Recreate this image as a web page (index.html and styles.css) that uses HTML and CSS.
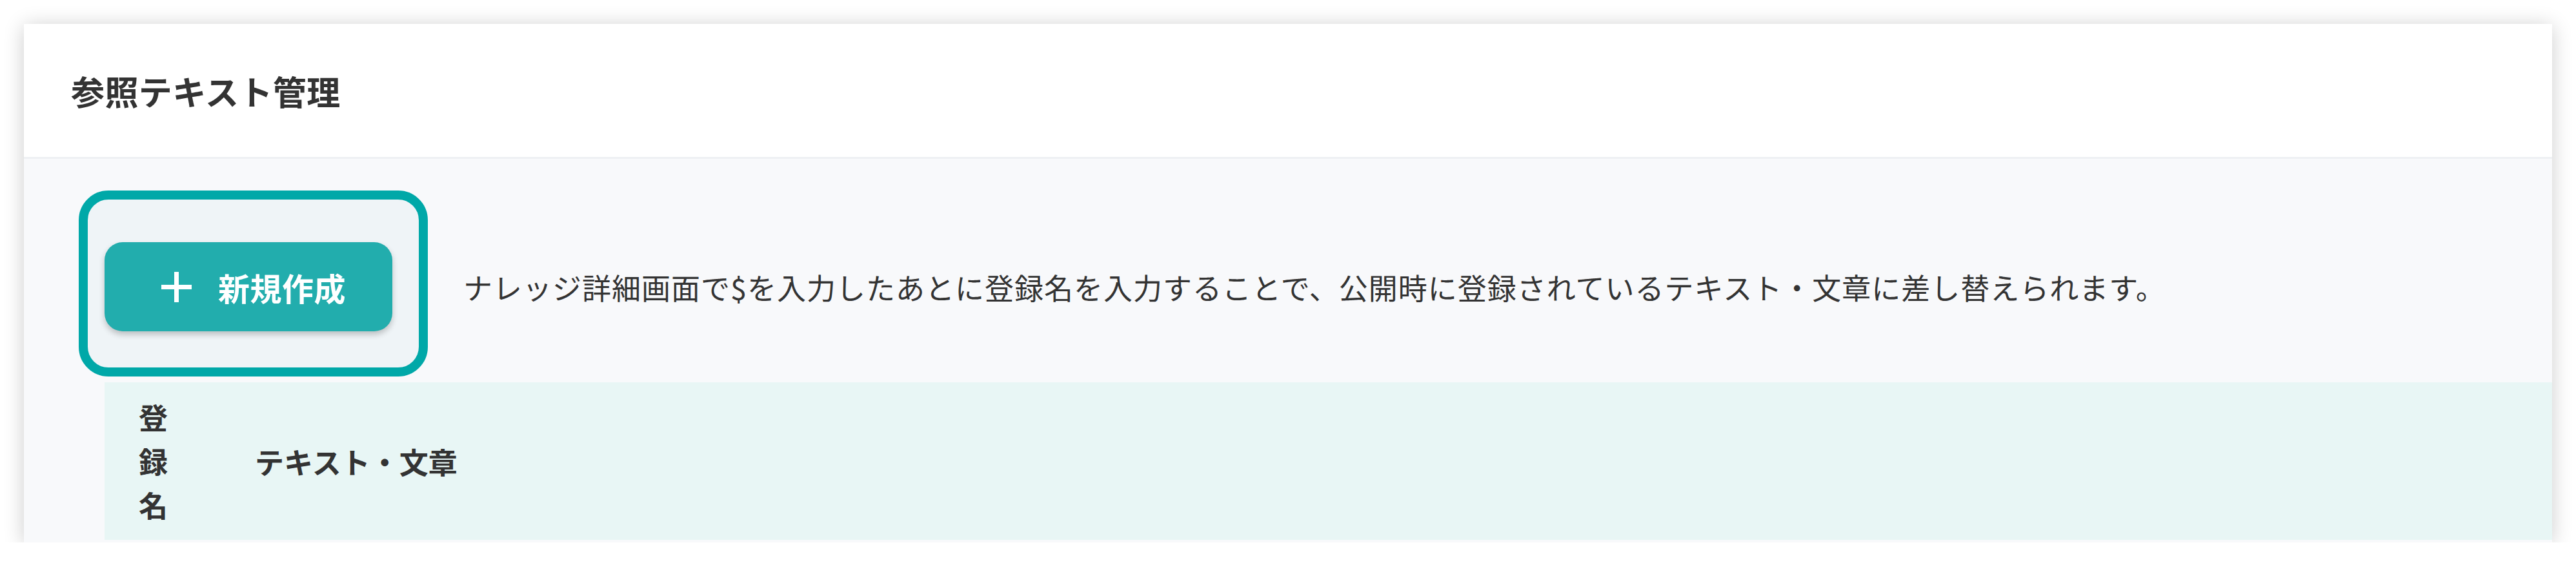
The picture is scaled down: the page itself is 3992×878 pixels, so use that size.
FILE: index.html
```html
<!DOCTYPE html>
<html lang="ja">
<head>
  <meta charset="UTF-8" />
  <meta name="viewport" content="width=device-width, initial-scale=1.0" />
  <title>参照テキスト管理</title>
  <link rel="stylesheet" href="styles.css">
</head>
<body>
  <section class="card">
    <header class="card-header">
      <h2 class="card-title">参照テキスト管理</h2>
    </header>

    <div class="card-body">
      <div class="toolbar">
        <div class="new-wrap">
          <span class="callout"></span>
          <button class="btn-new">
            <svg class="plus" viewBox="0 0 47 47" width="47" height="47">
              <path d="M23.5 0 V47 M0 23.5 H47" stroke="#fff" stroke-width="7" fill="none" />
            </svg>
            <span>新規作成</span>
          </button>
        </div>
        <p class="note">ナレッジ詳細画面で$を入力したあとに登録名を入力することで、公開時に登録されているテキスト・文章に差し替えられます。</p>
      </div>

      <div class="ref-table">
        <div class="ref-head">
          <div class="col-name">登録名</div>
          <div class="col-text">テキスト・文章</div>
        </div>
      </div>
    </div>
  </section>
</body>
</html>
```

FILE: styles.css
```css
body {
  margin: 0;
  background: #ffffff;
  font-family: "Noto Sans CJK JP", "Noto Sans", sans-serif;
  color: #333333;
}
.card {
  margin: 37px 37px 0;
  background: #f8f9fb;
  box-shadow: 0 3px 30px rgba(0,0,0,0.2);
}
.card-header {
  background: #ffffff;
  border-bottom: 3px solid #eef0f3;
  height: 206px;
  display: flex;
  align-items: center;
  padding-left: 73px;
}
.card-title {
  margin: 0;
  font-size: 52px;
  font-weight: bold;
  letter-spacing: 0.4px;
  color: #333;
}
.card-body {
  padding: 129px 0 4px 125px;
}
.toolbar {
  display: flex;
  align-items: center;
  gap: 110px;
  margin-bottom: 79px;
}
.new-wrap {
  position: relative;
  flex-shrink: 0;
}
.callout {
  position: absolute;
  left: -40px;
  top: -80px;
  right: -55px;
  bottom: -70px;
  border: 14px solid #00a8a8;
  border-radius: 46px;
  background: #eff4f7;
}
.btn-new {
  position: relative;
  display: flex;
  align-items: center;
  gap: 41px;
  height: 138px;
  padding: 0 72px 0 88px;
  border: none;
  border-radius: 28px;
  background: #22adad;
  color: #ffffff;
  font-family: inherit;
  font-size: 49px;
  font-weight: bold;
  letter-spacing: 0.5px;
  box-shadow: 0 5px 10px rgba(0,0,0,0.22);
  cursor: pointer;
}
.plus {
  display: block;
}
.note {
  margin: 0;
  font-size: 45px;
  letter-spacing: 1px;
  white-space: nowrap;
  color: #333;
}
.ref-table {
  background: #e8f6f5;
}
.ref-head {
  display: grid;
  grid-template-columns: 165px 1fr;
  align-items: center;
  font-size: 45px;
  font-weight: bold;
  color: #333;
}
.col-name {
  padding: 20px 67px 20px 53px;
  line-height: 68px;
}
.col-text {
  padding-left: 68px;
}
```
